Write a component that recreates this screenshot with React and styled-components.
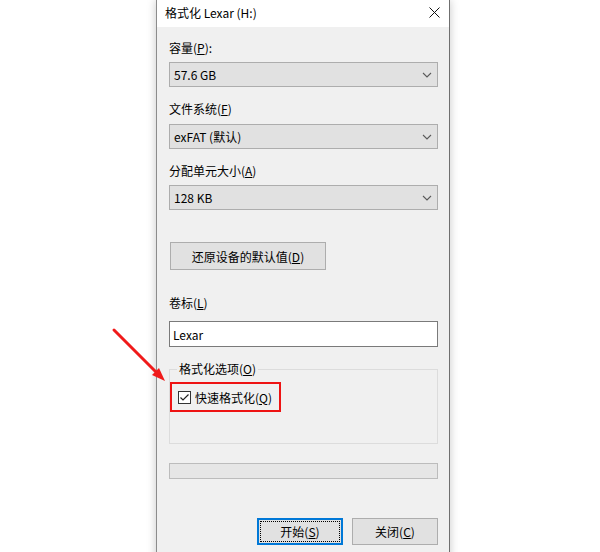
import React from 'react';
import styled, { createGlobalStyle, css } from 'styled-components';

const GlobalStyle = createGlobalStyle`
  html, body {
    margin: 0;
    padding: 0;
    background: #ffffff;
  }
  body {
    font-family: "Noto Sans CJK SC", "Noto Sans", sans-serif;
    font-size: 12px;
    color: #000;
  }
`;

const Page = styled.div`
  position: relative;
  width: 600px;
  height: 552px;
  overflow: hidden;
  display: flex;
  align-items: flex-start;
  padding-left: 156px;
  box-sizing: border-box;
`;

const Window = styled.div`
  width: 294px;
  height: 580px;
  box-sizing: border-box;
  border: 1px solid #8c8c8c;
  border-top: none;
  border-right-color: #6f6f6f;
  background: #f0f0f0;
  box-shadow: 0 0 9px rgba(0, 0, 0, 0.22);
  display: flex;
  flex-direction: column;
`;

const TitleBar = styled.div`
  height: 27px;
  background: #ffffff;
  display: flex;
  align-items: center;
  justify-content: space-between;
  padding: 0 9px 0 8px;
  flex-shrink: 0;
`;

const Title = styled.span`
  font-size: 12px;
  line-height: 16px;
  margin-top: -2px;
`;

const Body = styled.div`
  display: flex;
  flex-direction: column;
  padding: 13px 11px 0 12px;
`;

const Label = styled.div`
  line-height: 16px;
  height: 16px;
  margin-top: ${(p) => p.top || 0}px;
  margin-bottom: ${(p) => p.bottom || 6}px;
`;

const Select = styled.div`
  height: 25px;
  box-sizing: border-box;
  border: 1px solid #adadad;
  background: #e1e1e1;
  display: flex;
  align-items: center;
  justify-content: space-between;
  padding: 0 5px 0 4px;
`;

const Button = styled.div`
  height: ${(p) => p.h || 27}px;
  width: ${(p) => p.w}px;
  box-sizing: border-box;
  border: 1px solid #adadad;
  background: #e1e1e1;
  display: flex;
  align-items: center;
  justify-content: center;
  ${(p) =>
    p.focused &&
    css`
      border: 2px solid #0078d7;
      outline: 1px dotted #000;
      outline-offset: -4px;
    `}
`;

const ResetButton = styled(Button)`
  margin-top: 32px;
  margin-left: 1px;
`;

const TextInput = styled.div`
  height: 26px;
  box-sizing: border-box;
  border: 1px solid #7a7a7a;
  background: #ffffff;
  display: flex;
  align-items: center;
  padding-left: 3px;
`;

const Group = styled.fieldset`
  margin: 14px 0 0 0;
  padding: 5px 0 0 0;
  border: 1px solid #dcdcdc;
  height: 83px;
  box-sizing: border-box;
  min-width: 0;
`;

const Legend = styled.legend`
  margin-left: 7px;
  padding: 0 2px;
  line-height: 16px;
  color: #000;
`;

const Highlight = styled.div`
  width: 111px;
  height: 30px;
  box-sizing: border-box;
  border: 2px solid #ee1313;
  display: flex;
  align-items: center;
  gap: 4px;
  padding-left: 6px;
`;

const CheckBox = styled.div`
  width: 13px;
  height: 13px;
  box-sizing: border-box;
  border: 1px solid #333;
  background: #fff;
  display: flex;
  align-items: center;
  justify-content: center;
`;

const Progress = styled.div`
  margin-top: 19px;
  height: 16px;
  box-sizing: border-box;
  border: 1px solid #bcbcbc;
  background: #e6e6e6;
`;

const Footer = styled.div`
  margin-top: 39px;
  display: flex;
  justify-content: flex-end;
  gap: 9px;
`;

const Arrow = styled.svg`
  position: absolute;
  left: 108px;
  top: 324px;
`;

const Chevron = () => (
  <svg width="10" height="6" viewBox="0 0 10 6">
    <path d="M1 1 L5 5 L9 1" fill="none" stroke="#5a5a5a" strokeWidth="1.1" />
  </svg>
);

function App() {
  return (
    <>
      <GlobalStyle />
      <Page>
        <Window>
          <TitleBar>
            <Title>格式化 Lexar (H:)</Title>
            <svg width="11" height="11" viewBox="0 0 11 11" style={{ marginTop: -2 }}>
              <path d="M0.5 0.5 L10.5 10.5 M10.5 0.5 L0.5 10.5" stroke="#111" strokeWidth="1" />
            </svg>
          </TitleBar>
          <Body>
            <Label>容量(<u>P</u>):</Label>
            <Select>
              <span>57.6 GB</span>
              <Chevron />
            </Select>
            <Label top={14} bottom={7}>文件系统(<u>F</u>)</Label>
            <Select>
              <span>exFAT (默认)</span>
              <Chevron />
            </Select>
            <Label top={14}>分配单元大小(<u>A</u>)</Label>
            <Select>
              <span>128 KB</span>
              <Chevron />
            </Select>
            <ResetButton w={156} h={28}>
              还原设备的默认值(<u>D</u>)
            </ResetButton>
            <Label top={25} bottom={10}>卷标(<u>L</u>)</Label>
            <TextInput>Lexar</TextInput>
            <Group>
              <Legend>格式化选项(<u>O</u>)</Legend>
              <Highlight>
                <CheckBox>
                  <svg width="11" height="11" viewBox="0 0 11 11">
                    <path d="M1.5 5.5 L4 8 L9.5 2.5" fill="none" stroke="#222" strokeWidth="1.2" />
                  </svg>
                </CheckBox>
                <span>快速格式化(<u>Q</u>)</span>
              </Highlight>
            </Group>
            <Progress />
            <Footer>
              <Button w={86} focused>开始(<u>S</u>)</Button>
              <Button w={86}>关闭(<u>C</u>)</Button>
            </Footer>
          </Body>
        </Window>
        <Arrow width="64" height="64" viewBox="0 0 64 64">
          <path d="M6 6 L50 50" stroke="#f01a1a" strokeWidth="3" strokeLinecap="round" />
          <path d="M57 57 L44 51 L51 44 Z" fill="#f01a1a" />
        </Arrow>
      </Page>
    </>
  );
}

export default App;
